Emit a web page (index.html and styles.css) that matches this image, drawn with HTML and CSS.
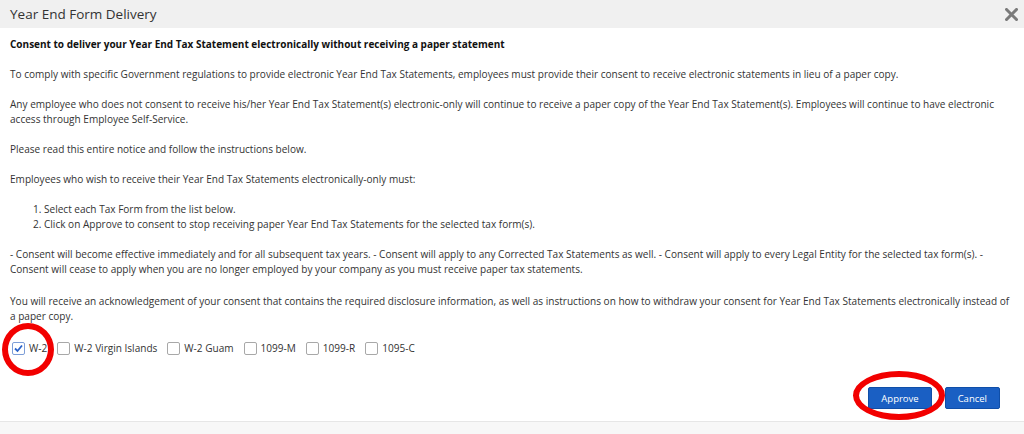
FILE: index.html
```html
<!DOCTYPE html>
<html lang="en">
<head>
    <meta charset="UTF-8">
    <title>Year End Form Delivery</title>
    <link rel="stylesheet" href="styles.css">
</head>
<body>
    <div class="modal">
        <div class="modal-header">
            <h1>Year End Form Delivery</h1>
            <span class="close">
                <svg width="13" height="13" viewBox="0 0 13 13"><path d="M1.5 1.5 L11.5 11.5 M11.5 1.5 L1.5 11.5" stroke="#7a7a7a" stroke-width="3" stroke-linecap="square"/></svg>
            </span>
        </div>

        <div class="modal-body">
            <p class="lead">Consent to deliver your Year End Tax Statement electronically without receiving a paper statement</p>
            <p>To comply with specific Government regulations to provide electronic Year End Tax Statements, employees must provide their consent to receive electronic statements in lieu of a paper copy.</p>
            <p>Any employee who does not consent to receive his/her Year End Tax Statement(s) electronic-only will continue to receive a paper copy of the Year End Tax Statement(s). Employees will continue to have electronic access through Employee Self-Service.</p>
            <p>Please read this entire notice and follow the instructions below.</p>
            <p>Employees who wish to receive their Year End Tax Statements electronically-only must:</p>
            <ol class="steps">
                <li>Select each Tax Form from the list below.</li>
                <li>Click on Approve to consent to stop receiving paper Year End Tax Statements for the selected tax form(s).</li>
            </ol>
            <p class="terms">- Consent will become effective immediately and for all subsequent tax years. - Consent will apply to any Corrected Tax Statements as well. - Consent will apply to every Legal Entity for the selected tax form(s). - Consent will cease to apply when you are no longer employed by your company as you must receive paper tax statements.</p>
            <p>You will receive an acknowledgement of your consent that contains the required disclosure information, as well as instructions on how to withdraw your consent for Year End Tax Statements electronically instead of a paper copy.</p>

            <div class="forms">
                <label class="form-item"><span class="box checked"><svg width="11" height="11" viewBox="0 0 11 11"><path d="M2 5.5 L4.5 8 L9 2.5" fill="none" stroke="#2a62c9" stroke-width="1.8"/></svg></span>W-2</label>
                <label class="form-item"><span class="box"></span>W-2 Virgin Islands</label>
                <label class="form-item"><span class="box"></span>W-2 Guam</label>
                <label class="form-item"><span class="box"></span>1099-M</label>
                <label class="form-item"><span class="box"></span>1099-R</label>
                <label class="form-item"><span class="box"></span>1095-C</label>
            </div>
        </div>

        <div class="modal-actions">
            <button class="btn">Approve</button>
            <button class="btn">Cancel</button>
        </div>
        <div class="modal-bottom"></div>

        <!-- red marks drawn over the screenshot -->
        <div class="mark mark-w2"></div>
        <div class="mark mark-approve"></div>
    </div>
</body>
</html>
```

FILE: styles.css
```css
body {
    margin: 0;
    font-family: "Open Sans", Arial, sans-serif;
    background-color: #fff;
    color: #333;
}

.modal {
    position: relative;
    width: 1024px;
    height: 434px;
    overflow: hidden;
}

.modal-header {
    height: 28px;
    display: flex;
    align-items: center;
    justify-content: space-between;
    padding: 0 6px 0 10px;
    background-color: #f0f0f0;
}

.modal-header h1 {
    margin: 0;
    font-size: 13.5px;
    font-weight: normal;
    color: #333;
}

.close {
    display: flex;
    width: 13px;
    height: 13px;
}

.modal-body {
    padding: 9px 14px 0 10px;
    font-size: 10.05px;
    line-height: 15px;
}

.modal-body p {
    margin: 0 0 15px 0;
}

.modal-body p.terms {
    margin-bottom: 17px;
}

.lead {
    font-weight: bold;
    font-size: 10px;
    color: #111;
}

.steps {
    margin: 0 0 15px 0;
    padding-left: 34px;
}

.forms {
    display: flex;
    align-items: center;
    gap: 10px;
    padding: 2px 0 0 2px;
}

.form-item {
    display: flex;
    align-items: center;
    gap: 4px;
}

.box {
    width: 11px;
    height: 11px;
    border: 1px solid #a8a8a8;
    border-radius: 2px;
    background-color: #fff;
    display: flex;
    align-items: center;
    justify-content: center;
}

.box.checked {
    border-color: #7d9ed8;
}

.modal-actions {
    display: flex;
    justify-content: flex-end;
    gap: 13px;
    padding: 31px 24px 0 0;
}

.btn {
    height: 22px;
    padding: 0 12px;
    font-family: "Open Sans", Arial, sans-serif;
    font-size: 9.5px;
    color: #fff;
    background-color: #1a5fc3;
    border: 1px solid #0f4ea8;
    border-radius: 2px;
}

.modal-bottom {
    position: absolute;
    left: 0;
    right: 0;
    bottom: 0;
    height: 12px;
    background-color: #f7f7f7;
    border-top: 1px solid #e6e6e6;
}

.mark {
    position: absolute;
    border: 6px solid #f20000;
    border-radius: 50%;
    box-sizing: border-box;
}

.mark-w2 {
    left: 2px;
    top: 323px;
    width: 52px;
    height: 53px;
}

.mark-approve {
    left: 853px;
    top: 371px;
    width: 92px;
    height: 49px;
}
```
